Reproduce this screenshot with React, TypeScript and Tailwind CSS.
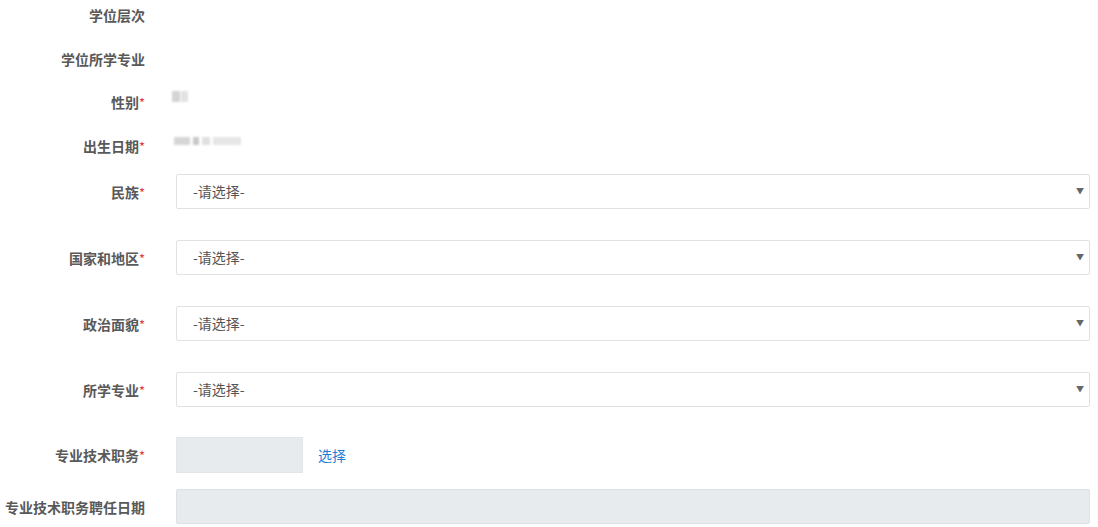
import React from "react";

const font = { fontFamily: '"Microsoft YaHei","Noto Sans CJK SC","Noto Sans",sans-serif' };

function Label({ text, req }: { text: string; req?: boolean }) {
  return (
    <div className="w-[145px] shrink-0 text-right text-[14px] font-bold text-[#595959] leading-none whitespace-nowrap">
      {text}
      {req && <span className="text-[#e4393c] font-normal text-[13px]">*</span>}
    </div>
  );
}

function Select() {
  return (
    <div className="flex-1 h-[35px] border border-[#e2e2e2] rounded-[2px] bg-white flex items-center justify-between pl-[16px] pr-[5px] text-[14px] text-[#555]">
      <span>-请选择-</span>
      <span className="text-[8px] text-[#666] mb-[2px]">▼</span>
    </div>
  );
}

export default function App() {
  return (
    <div className="w-[1098px] h-[527px] bg-white overflow-hidden" style={font}>
      <div className="flex flex-col pr-[8px]">
        <div className="flex items-center h-[30px]">
          <Label text="学位层次" />
        </div>
        <div className="flex items-center h-[30px] mt-[14px]">
          <Label text="学位所学专业" />
        </div>
        <div className="flex items-center h-[30px] mt-[13px]">
          <Label text="性别" req />
          <div className="ml-[27px] mb-[12px] flex gap-[1px] blur-[1px]">
            <div className="w-[8px] h-[11px] bg-[#d4d4d4]" />
            <div className="w-[7px] h-[11px] bg-[#e2e2e2]" />
          </div>
        </div>
        <div className="flex items-center h-[30px] mt-[14px]">
          <Label text="出生日期" req />
          <div className="ml-[29px] mb-[10px] flex items-center gap-[3px] blur-[1px]">
            <div className="w-[16px] h-[8px] bg-[#d6d6d6]" />
            <div className="w-[6px] h-[8px] bg-[#c8c8c8]" />
            <div className="w-[8px] h-[8px] bg-[#e0e0e0]" />
            <div className="w-[28px] h-[8px] bg-[#e6e6e6]" />
          </div>
        </div>
        <div className="flex items-center mt-[13px] gap-[31px]">
          <Label text="民族" req />
          <Select />
        </div>
        <div className="flex items-center mt-[31px] gap-[31px]">
          <Label text="国家和地区" req />
          <Select />
        </div>
        <div className="flex items-center mt-[31px] gap-[31px]">
          <Label text="政治面貌" req />
          <Select />
        </div>
        <div className="flex items-center mt-[31px] gap-[31px]">
          <Label text="所学专业" req />
          <Select />
        </div>
        <div className="flex items-center mt-[30px] gap-[31px]">
          <Label text="专业技术职务" req />
          <div className="w-[127px] h-[36px] bg-[#e8ebee] border border-[#e3e6e9]" />
          <span className="text-[14px] text-[#1e7fd8] -ml-[16px]">选择</span>
        </div>
        <div className="flex items-center mt-[16px] gap-[31px]">
          <Label text="专业技术职务聘任日期" />
          <div className="flex-1 h-[35px] bg-[#e8ebee] border border-[#dfe2e5] rounded-[2px]" />
        </div>
      </div>
    </div>
  );
}
